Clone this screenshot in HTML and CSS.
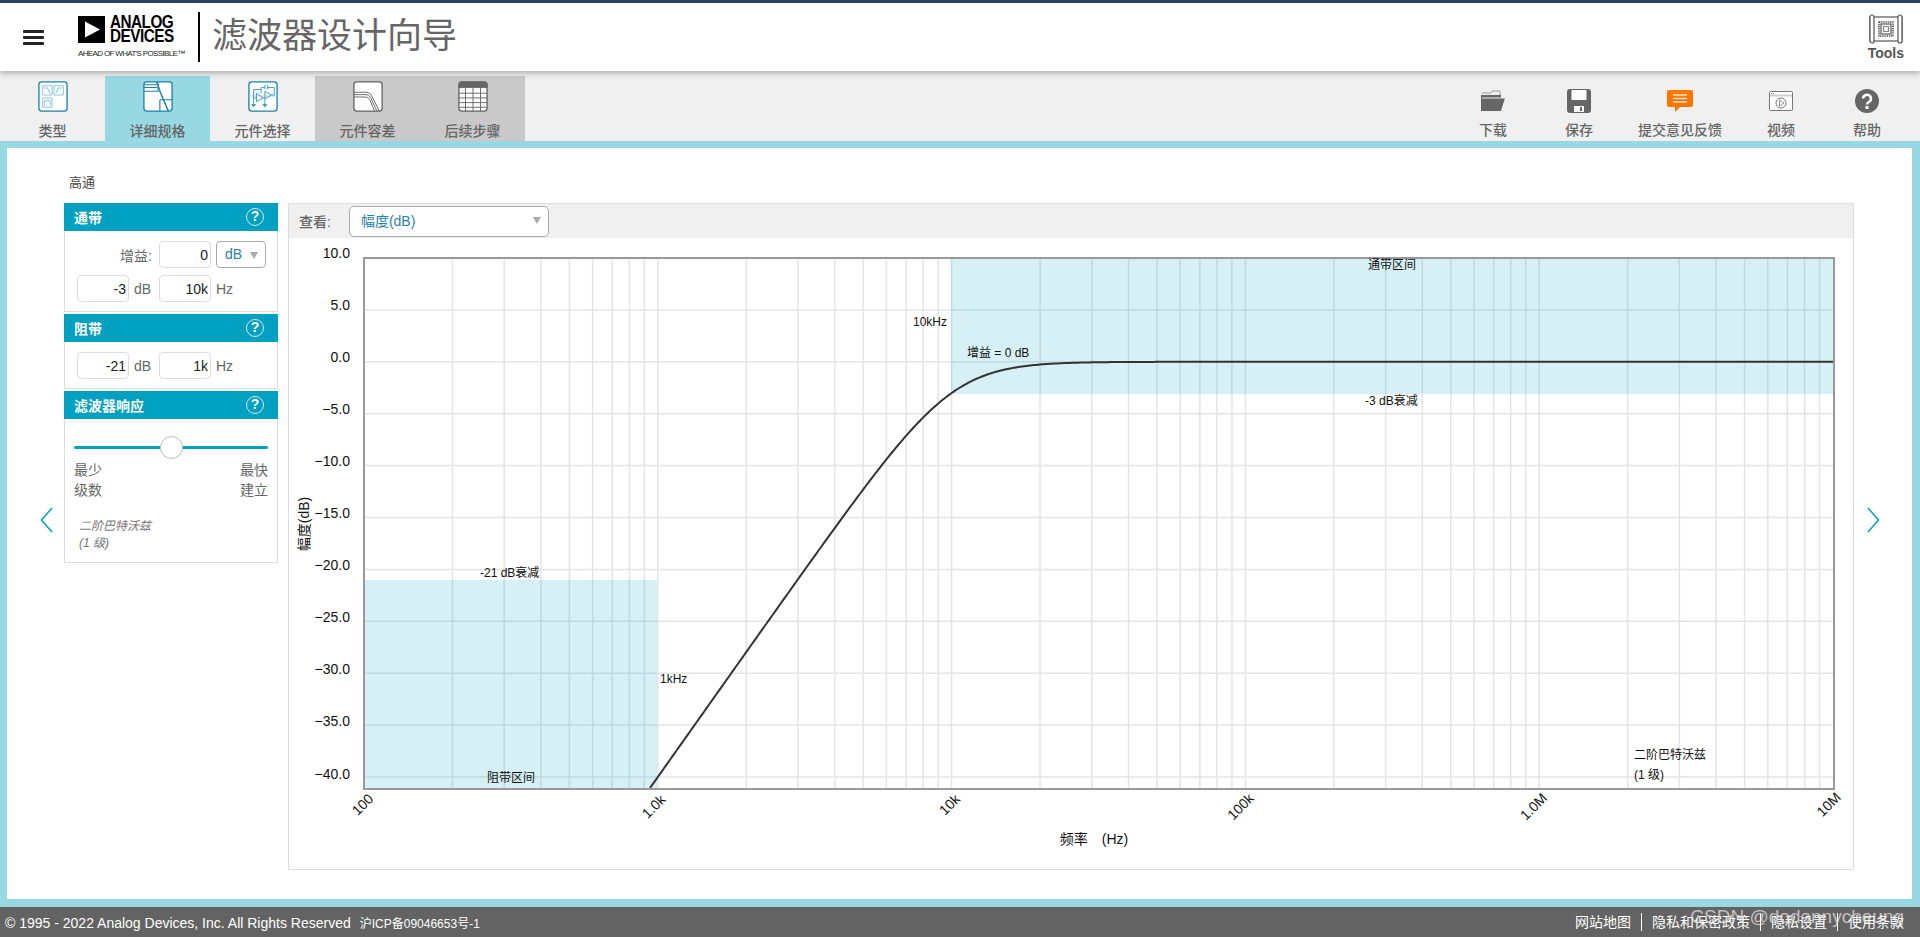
FILE: index.html
```html
<!DOCTYPE html>
<html>
<head>
    <title>滤波器设计向导</title>
    <link rel="stylesheet" href="styles.css">
</head>
<body>
    <div class="header">
        <div class="menu-btn"><span></span><span></span><span></span></div>
        <div class="logo">
            <div class="logo-top">
                <svg class="logo-mark" width="27" height="27" viewBox="0 0 27 27"><rect width="27" height="27" fill="#000"/><path d="M7 5.5 L22 13.5 L7 21.5 Z" fill="#fff"/></svg>
                <div class="logo-name"><div>ANALOG</div><div>DEVICES</div></div>
            </div>
            <div class="logo-tag">AHEAD OF WHAT'S POSSIBLE™</div>
        </div>
        <div class="app-title">滤波器设计向导</div>
        <div class="tools-link">
            <svg width="34" height="30" viewBox="0 0 34 30" fill="none" stroke="#555" stroke-width="1.2">
                <rect x="1" y="3" width="32" height="24" fill="#fff"/>
                <path d="M1 3 a2 2 0 0 1 4 0 V27 a2 2 0 0 1 -4 0 Z M29 3 a2 2 0 0 1 4 0 V27 a2 2 0 0 1 -4 0 Z" fill="#fff"/>
                <rect x="10" y="8" width="14" height="14" stroke-dasharray="1.4 .8" stroke-width="1.6"/>
                <rect x="12" y="10" width="10" height="10"/>
                <rect x="14.5" y="12.5" width="5" height="5" stroke="#888"/>
            </svg>
            <div>Tools</div>
        </div>
    </div>

    <div class="navbar">
        <div class="tabs">
            <div class="tab">
                <svg width="32" height="33" viewBox="0 0 32 33" fill="none">
                    <rect x="1" y="1" width="30" height="31" rx="3" fill="#fff" stroke="#1b84a8" stroke-width="1.4"/>
                    <g stroke="#8cc6d6" stroke-width="1.1">
                        <rect x="5" y="5" width="10" height="10" rx="1"/><rect x="17" y="5" width="10" height="10" rx="1"/><rect x="5" y="18" width="10" height="10" rx="1"/>
                        <path d="M6.5 7.5 H10 L13 13 M25.5 7.5 H22 L19 13 M7 26 V22 Q7 20.5 10 20.5 Q13 20.5 13 22 V26"/>
                    </g>
                </svg>
                <div class="tab-label">类型</div>
            </div>
            <div class="tab tab-active">
                <svg width="32" height="33" viewBox="0 0 32 33" fill="none" stroke="#1b84a8">
                    <rect x="1" y="1" width="30" height="31" rx="3" fill="#fff" stroke-width="1.4"/>
                    <path d="M1 4 H15 M1 7 H15 M1 11 H16 V4 M15 1 V4" stroke-width="1.1"/>
                    <path d="M15 1 L18 11 L27 32" stroke-width="1.6"/>
                    <path d="M18 20 H31 M18 20 V32" stroke-width="1.2"/>
                </svg>
                <div class="tab-label">详细规格</div>
            </div>
            <div class="tab">
                <svg width="32" height="33" viewBox="0 0 32 33" fill="none" stroke="#1b84a8">
                    <rect x="1" y="1" width="30" height="31" rx="3" fill="#fff" stroke-width="1.4"/>
                    <g stroke="#3d9bb8" stroke-width="1">
                        <path d="M1 16 H31" stroke="#a5d3df"/>
                        <path d="M9 13 L16 18 L9 22 Z M18 11 L25 15 L18 19 Z"/>
                        <path d="M6 9 H14 V13 M6 9 V18 H9 M16 18 H18 M25 15 H28 V7 H21 M18 7 H14 V9 M18 4 V9 M21 4 V9 M6 18 V25 M18 19 V25"/>
                        <path d="M4 25 H8 L6 27.5 Z M16 25 H20 L18 27.5 Z" fill="#3d9bb8"/>
                    </g>
                </svg>
                <div class="tab-label">元件选择</div>
            </div>
            <div class="tab tab-off">
                <svg width="32" height="33" viewBox="0 0 32 33" fill="none" stroke="#666">
                    <rect x="1" y="1" width="30" height="31" rx="3" fill="#fff" stroke-width="1.4"/>
                    <path d="M1 12 H15 Q18 12 20 16 L28 32 M1 14.5 H14 Q17 14.5 19 18 L25.5 32 M1 17 H13 Q16 17 18 20 L23 32" stroke-width="1"/>
                </svg>
                <div class="tab-label">元件容差</div>
            </div>
            <div class="tab tab-off">
                <svg width="32" height="33" viewBox="0 0 32 33" fill="none" stroke="#666">
                    <rect x="1" y="1" width="30" height="31" rx="3" fill="#fff" stroke-width="1.4"/>
                    <path d="M1 7 V4 a3 3 0 0 1 3 -3 H28 a3 3 0 0 1 3 3 V7 Z" fill="#666"/>
                    <path d="M1 13 H31 M1 18 H31 M1 23 H31 M1 28 H31 M8 7 V32 M16 7 V32 M24 7 V32" stroke-width="1"/>
                </svg>
                <div class="tab-label">后续步骤</div>
            </div>
        </div>
        <div class="actions">
            <div class="action">
                <svg width="26" height="24" viewBox="0 0 26 24"><path d="M2 4 H11 L12 2 H20 V6" fill="none" stroke="#999"/><path d="M1 21 V6 H21 V9 H25 L21 22 H1 Z" fill="#666"/><path d="M2 9 H25" stroke="#eee"/></svg>
                <div class="action-label">下载</div>
            </div>
            <div class="action">
                <svg width="24" height="24" viewBox="0 0 24 24"><rect width="24" height="24" rx="3" fill="#666"/><rect x="4.5" y="1" width="15" height="10" fill="#fff"/><rect x="7" y="17" width="10" height="6" fill="#fff"/><rect x="13" y="18" width="2" height="4" fill="#666"/></svg>
                <div class="action-label">保存</div>
            </div>
            <div class="action action-wide">
                <svg width="26" height="24" viewBox="0 0 26 24"><path d="M2 1 H24 a2 2 0 0 1 2 2 V16 a2 2 0 0 1 -2 2 H13 L8 23 V18 H2 a2 2 0 0 1 -2 -2 V3 a2 2 0 0 1 2 -2 Z" fill="#ff7500"/><path d="M6 6 H20 M6 9.5 H20 M6 13 H20" stroke="#ffe3cc" stroke-width="1.5"/></svg>
                <div class="action-label">提交意见反馈</div>
            </div>
            <div class="action">
                <svg width="24" height="24" viewBox="0 0 24 24" fill="none" stroke="#777"><rect x=".5" y="2.5" width="23" height="19" rx="1" fill="#fff"/><path d="M1 6.5 H23" stroke="#ccc" stroke-width="2"/><path d="M2 4.5 H6" stroke="#777" stroke-dasharray="1 1"/><circle cx="12" cy="14" r="5"/><path d="M10.5 11 L15 14 L10.5 17 Z" stroke-width=".8"/></svg>
                <div class="action-label">视频</div>
            </div>
            <div class="action">
                <svg width="24" height="24" viewBox="0 0 24 24"><circle cx="12" cy="12" r="12" fill="#666"/><path d="M8 9.5 a4 3.8 0 1 1 6.5 3 Q12 14 12 15.5" fill="none" stroke="#fff" stroke-width="2.6"/><rect x="10.5" y="17" width="3" height="3" fill="#fff"/></svg>
                <div class="action-label">帮助</div>
            </div>
        </div>
    </div>

    <div class="main">
        <div class="arrow-col arrow-left">
            <svg width="13" height="26" viewBox="0 0 13 26"><path d="M12 1 L1.5 13 L12 25" fill="none" stroke="#00a0c0" stroke-width="1.5"/></svg>
        </div>
        <div class="content">
            <div class="filter-type">高通</div>
            <div class="workspace">
                <div class="sidebar">
                    <div class="section-head">通带<span class="help">?</span></div>
                    <div class="section-body field-grid">
                        <div class="gain-label">增益:</div>
                        <input class="field" value="0">
                        <div class="unit-select">dB<span class="caret"></span></div>
                        <input class="field" value="-3">
                        <div class="unit">dB</div>
                        <input class="field" value="10k">
                        <div class="unit">Hz</div>
                    </div>
                    <div class="section-head">阻带<span class="help">?</span></div>
                    <div class="section-body field-grid">
                        <input class="field" value="-21">
                        <div class="unit">dB</div>
                        <input class="field" value="1k">
                        <div class="unit">Hz</div>
                    </div>
                    <div class="section-head">滤波器响应<span class="help">?</span></div>
                    <div class="section-body response">
                        <div class="slider"><div class="slider-thumb"></div></div>
                        <div class="slider-labels"><span>最少</span><span>最快</span></div>
                        <div class="slider-labels"><span>级数</span><span>建立</span></div>
                        <div class="filter-note">二阶巴特沃兹<br>(1 级)</div>
                    </div>
                </div>
                <div class="chart-panel">
                    <div class="chart-toolbar">
                        <span class="view-label">查看:</span>
                        <div class="view-select">幅度(dB)<span class="caret"></span></div>
                    </div>
                    <svg id="chart" class="chart" viewBox="289 238 1564 631">
                        <g id="gridLines"></g>
                        <rect class="band" x="364" y="580" width="293" height="208"/>
                        <rect class="band" x="951" y="258" width="882" height="136"/>
                        <path id="curve" class="curve"/>
                        <rect class="plot-frame" x="364" y="258" width="1470" height="531"/>

                        <g class="tick-y">
                            <text x="350" y="258">10.0</text>
                            <text x="350" y="310">5.0</text>
                            <text x="350" y="362">0.0</text>
                            <text x="350" y="414">−5.0</text>
                            <text x="350" y="466">−10.0</text>
                            <text x="350" y="518">−15.0</text>
                            <text x="350" y="570">−20.0</text>
                            <text x="350" y="622">−25.0</text>
                            <text x="350" y="674">−30.0</text>
                            <text x="350" y="726">−35.0</text>
                            <text x="350" y="779">−40.0</text>
                        </g>
                        <g class="tick-x">
                            <text transform="translate(366 808) rotate(-45)">100</text>
                            <text transform="translate(657 810) rotate(-45)">1.0k</text>
                            <text transform="translate(953 808) rotate(-45)">10k</text>
                            <text transform="translate(1244 810) rotate(-45)">100k</text>
                            <text transform="translate(1537 810) rotate(-45)">1.0M</text>
                            <text transform="translate(1832 808) rotate(-45)">10M</text>
                        </g>
                        <text class="axis-title" x="1094" y="844">频率&#8195;(Hz)</text>
                        <text class="axis-title" transform="translate(309 524) rotate(-90)">幅度(dB)</text>

                        <g class="note">
                            <text x="1368" y="269">通带区间</text>
                            <text x="913" y="326">10kHz</text>
                            <text x="967" y="357">增益 = 0 dB</text>
                            <text x="1365" y="405">-3 dB衰减</text>
                            <text x="480" y="577">-21 dB衰减</text>
                            <text x="660" y="683">1kHz</text>
                            <text x="487" y="782">阻带区间</text>
                            <text x="1634" y="759">二阶巴特沃兹</text>
                            <text x="1634" y="779">(1 级)</text>
                        </g>
                    </svg>
                </div>
            </div>
        </div>
        <div class="arrow-col arrow-right">
            <svg width="13" height="26" viewBox="0 0 13 26"><path d="M1 1 L11.5 13 L1 25" fill="none" stroke="#00a0c0" stroke-width="1.5"/></svg>
        </div>
    </div>

    <div class="footer">
        <div class="copyright">© 1995 - 2022 Analog Devices, Inc. All Rights Reserved<span class="icp">沪ICP备09046653号-1</span></div>
        <div class="footer-links">
            <a>网站地图</a><a>隐私和保密政策</a><a>隐私设置</a><a>使用条款</a>
        </div>
        <div class="watermark">CSDN @dodannycheung</div>
    </div>

    <script src="chart.js"></script>
</body>
</html>
```

FILE: styles.css
```css
* {
    margin: 0;
    padding: 0;
    box-sizing: border-box;
    font-family: "Liberation Sans", "Noto Sans CJK SC", sans-serif;
}

body {
    height: 100vh;
    display: flex;
    flex-direction: column;
    overflow: hidden;
    background: white;
}

/* header */
.header {
    position: relative;
    z-index: 2;
    height: 71px;
    flex: none;
    display: flex;
    align-items: center;
    background: white;
    border-top: 3px solid #25435f;
    box-shadow: 0 2px 6px rgba(0, 0, 0, 0.3);
}

.menu-btn {
    width: 21px;
    flex: none;
    margin-left: 23px;
    display: flex;
    flex-direction: column;
    gap: 3px;
}

.menu-btn span {
    height: 3px;
    border-radius: 1px;
    background: #222;
}

.logo {
    margin-left: 34px;
    width: 120px;
    flex: none;
}

.logo-top {
    display: flex;
    gap: 5px;
}

.logo-mark {
    flex: none;
}

.logo-name {
    font-size: 18px;
    font-weight: bold;
    line-height: 13.5px;
    color: #000;
    letter-spacing: -0.6px;
    transform: scaleX(0.85);
    transform-origin: left;
}

.logo-tag {
    margin-top: 6px;
    font-size: 8px;
    line-height: 9px;
    letter-spacing: -0.65px;
    color: #222;
    white-space: nowrap;
}

.app-title {
    height: 50px;
    padding-left: 12px;
    border-left: 2px solid #000;
    font-size: 35px;
    line-height: 48px;
    color: #666;
}

.tools-link {
    margin-left: auto;
    margin-right: 16px;
    padding-top: 2px;
    display: flex;
    flex-direction: column;
    align-items: center;
    font-size: 14px;
    font-weight: bold;
    font-family: "Open Sans", sans-serif;
    color: #555;
    line-height: 18px;
}

/* toolbar with the steps */
.navbar {
    height: 70px;
    flex: none;
    display: flex;
    justify-content: space-between;
    background: #f0f0f0;
}

.tabs {
    display: flex;
    margin-top: 5px;
}

.tab {
    width: 105px;
    display: flex;
    flex-direction: column;
    align-items: center;
    padding-top: 5px;
}

.tab-active {
    background: #98d8e3;
}

.tab-off {
    background: #c9c9c9;
}

.tab-label {
    margin-top: 9px;
    font-size: 14px;
    font-weight: 500;
    line-height: 20px;
    color: #666;
}

.actions {
    display: flex;
    padding-right: 10px;
}

.action {
    width: 86px;
    padding-top: 18px;
    display: flex;
    flex-direction: column;
    align-items: center;
}

.action-wide {
    width: 116px;
}

.action-label {
    margin-top: 7px;
    font-size: 14px;
    font-weight: 500;
    line-height: 20px;
    color: #666;
}

/* main area */
.main {
    flex: 1;
    min-height: 0;
    display: flex;
    background: white;
    border: 7px solid #98d8e3;
    border-right-width: 8px;
    border-bottom-width: 8px;
}

.arrow-col {
    width: 57px;
    flex: none;
    display: flex;
    align-items: center;
    padding-bottom: 8px;
}

.arrow-left {
    justify-content: flex-end;
    padding-right: 11px;
}

.arrow-right {
    padding-left: 12px;
}

.content {
    flex: 1;
}

.filter-type {
    height: 55px;
    padding: 26px 0 0 5px;
    font-size: 13px;
    line-height: 18px;
    color: #444;
}

.workspace {
    display: flex;
    gap: 10px;
}

/* left column */
.sidebar {
    width: 214px;
    flex: none;
}

.section-head {
    height: 28px;
    padding: 0 10px;
    display: flex;
    align-items: center;
    justify-content: space-between;
    background: #00a0c0;
    color: white;
    font-size: 14px;
    font-weight: 700;
}

.help {
    width: 18px;
    height: 18px;
    margin-right: 4px;
    border: 1.5px solid #cfecf2;
    border-radius: 50%;
    font-size: 14px;
    line-height: 15px;
    text-align: center;
}

.section-body {
    border: 1px solid #ddd;
    border-top: none;
    margin-bottom: 2px;
}

.field-grid {
    display: grid;
    grid-template-columns: 52px 30px 52px 55px;
    row-gap: 7px;
    padding: 10px 0 9px 12px;
    align-items: center;
}

.gain-label {
    grid-column: 1 / 3;
    padding-right: 7px;
    text-align: right;
    font-size: 14px;
    color: #666;
}

.field {
    width: 52px;
    height: 27px;
    padding-right: 2px;
    border: 1px solid #ddd;
    border-radius: 4px;
    text-align: right;
    font-size: 14px;
    color: #222;
    outline: none;
}

.unit {
    padding-left: 5px;
    font-size: 14px;
    color: #666;
}

.unit-select {
    width: 50px;
    height: 27px;
    margin-left: 5px;
    padding-left: 8px;
    position: relative;
    border: 1px solid #aaa;
    border-radius: 4px;
    font-size: 14px;
    line-height: 25px;
    color: #2a7fa5;
}

.caret {
    position: absolute;
    right: 7px;
    top: 10px;
    border-left: 4.5px solid transparent;
    border-right: 4.5px solid transparent;
    border-top: 7px solid #aaa;
}

.response {
    height: 144px;
    padding: 17px 9px 0;
}

.slider {
    height: 3px;
    margin: 10px 0 12px;
    position: relative;
    background: #00a0c0;
    border-radius: 2px;
}

.slider-thumb {
    position: absolute;
    left: 86px;
    top: -10px;
    width: 23px;
    height: 23px;
    background: white;
    border: 1px solid #bbb;
    border-radius: 50%;
}

.slider-labels {
    display: flex;
    justify-content: space-between;
    font-size: 14px;
    line-height: 19.5px;
    color: #666;
}

.filter-note {
    margin-top: 18px;
    padding-left: 5px;
    font-size: 12px;
    font-style: italic;
    line-height: 17px;
    color: #777;
}

/* chart */
.chart-panel {
    width: 1566px;
    height: 667px;
    flex: none;
    display: flex;
    flex-direction: column;
    border: 1px solid #ddd;
}

.chart-toolbar {
    height: 34px;
    flex: none;
    display: flex;
    align-items: center;
    gap: 18px;
    padding-left: 10px;
    background: #f0f0f0;
}

.view-label {
    font-size: 14px;
    font-weight: 500;
    color: #666;
}

.view-select {
    width: 200px;
    height: 31px;
    padding-left: 11px;
    position: relative;
    background: white;
    border: 1px solid #aaa;
    border-radius: 5px;
    font-size: 14px;
    line-height: 28px;
    color: #2a7fa5;
}

.chart {
    display: block;
    flex: 1;
    width: 1564px;
    height: 631px;
}

.chart text {
    fill: #111;
}

.grid-line {
    stroke: #e4e4e4;
    stroke-width: 1.5;
}

.band {
    fill: rgba(0, 160, 192, 0.16);
}

.curve {
    fill: none;
    stroke: #333;
    stroke-width: 2;
}

.plot-frame {
    fill: none;
    stroke: #999;
    stroke-width: 2;
}

.tick-y text {
    font-size: 14px;
    text-anchor: end;
}

.tick-x text {
    font-size: 14px;
    text-anchor: middle;
}

.axis-title {
    font-size: 14px;
    text-anchor: middle;
}

.note text {
    font-size: 12px;
}

/* footer */
.footer {
    height: 30px;
    flex: none;
    position: relative;
    display: flex;
    align-items: center;
    justify-content: space-between;
    padding: 0 16px 0 5px;
    background: #636363;
    color: white;
    font-size: 14px;
}

.copyright {
    font-size: 14px;
}

.icp {
    margin-left: 9px;
    font-size: 12px;
}

.footer-links {
    display: flex;
}

.footer-links a {
    padding: 0 10px;
    border-left: 1px solid white;
    line-height: 18px;
}

.footer-links a:first-child {
    border-left: none;
}

.footer-links a:last-child {
    padding-right: 0;
}

.watermark {
    position: absolute;
    right: 16px;
    top: -1px;
    font-size: 19px;
    line-height: 22px;
    color: rgba(235, 235, 235, 0.7);
    white-space: nowrap;
}
```

FILE: chart.js
```js
// plot area in page pixels
const X0 = 364, DECADE = 293.8;
const Y_TOP = 258, DB_PX = 10.38;
const FC = 10000;

function xOf(freq) {
    return X0 + Math.log10(freq / 100) * DECADE;
}

function yOf(db) {
    return Y_TOP + (10 - db) * DB_PX;
}

const svgNS = 'http://www.w3.org/2000/svg';
const grid = document.getElementById('gridLines');

function addLine(x1, y1, x2, y2) {
    const line = document.createElementNS(svgNS, 'line');
    line.setAttribute('x1', x1);
    line.setAttribute('y1', y1);
    line.setAttribute('x2', x2);
    line.setAttribute('y2', y2);
    line.setAttribute('class', 'grid-line');
    grid.appendChild(line);
}

// log grid
for (let dec = 100; dec < 10000000; dec *= 10) {
    for (let m = 1; m < 10; m++) {
        if (dec === 100 && m === 1) continue;
        const x = xOf(dec * m);
        addLine(x, 258, x, 788);
    }
}

for (let db = 5; db >= -40; db -= 5) {
    addLine(364, yOf(db), 1833, yOf(db));
}

// second order butterworth high pass
let d = '';
for (let x = 650; x <= 1834; x += 2) {
    const f = 100 * Math.pow(10, (x - X0) / DECADE);
    const db = -10 * Math.log10(1 + Math.pow(FC / f, 4));
    d += (d ? ' L' : 'M') + x + ' ' + yOf(db).toFixed(2);
}
document.getElementById('curve').setAttribute('d', d);
```
